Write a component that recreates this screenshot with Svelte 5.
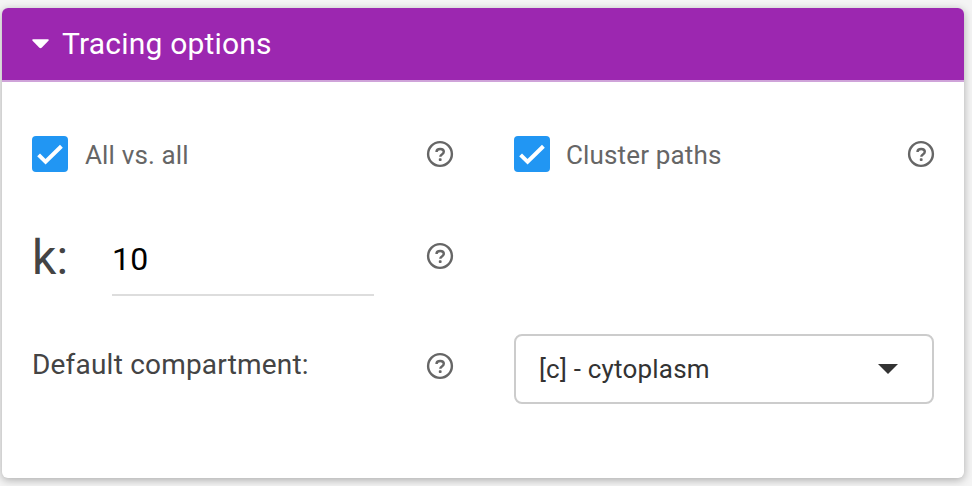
<script>
  let allVsAll = $state(true);
  let cluster = $state(true);
  let k = $state('10');
</script>

{#snippet help()}
  <svg class="help" viewBox="0 0 28 28" aria-label="Help">
    <circle cx="14" cy="14" r="11.9" />
    <path d="M10.5 12C10.5 10.1 12 9 14.2 9s3.6 1.1 3.6 2.8c0 1.3-.8 1.9-1.9 2.6-1.1.7-1.6 1.2-1.6 2.3" />
    <rect x="12.8" y="18.3" width="2.8" height="2.7" rx=".8" />
  </svg>
{/snippet}

{#snippet check(on, toggle, label)}
  <button class="check" role="checkbox" aria-checked={on} onclick={toggle}>
    <span class="box" class:on>
      {#if on}
        <svg viewBox="0 0 36 36"><path d="M6.6 18.8 13.6 25.8 29.4 10.3" /></svg>
      {/if}
    </span>
    <span class="label">{label}</span>
  </button>
{/snippet}

<main>
  <section class="card">
    <header>
      <svg class="caret" viewBox="0 0 18 10"><path d="M1 0h16q1.2.5.4 1.6L10.2 9q-1.2 1-2.4 0L.6 1.6Q-.2.5 1 0z" /></svg>
      <h1>Tracing options</h1>
    </header>
    <div class="body">
      <div class="row first">
        <div class="left">
          {@render check(allVsAll, () => (allVsAll = !allVsAll), 'All vs. all')}
          {@render help()}
        </div>
        <div class="right">
          {@render check(cluster, () => (cluster = !cluster), 'Cluster paths')}
          {@render help()}
        </div>
      </div>
      <div class="row second">
        <div class="left">
          <label class="k" for="k">k:</label>
          <input id="k" bind:value={k} />
          {@render help()}
        </div>
      </div>
      <div class="row third">
        <div class="left">
          <span class="compartment">Default compartment:</span>
          {@render help()}
        </div>
        <button class="select">
          <span>[c] - cytoplasm</span>
          <svg viewBox="0 0 20 10"><path d="M0 0h20L10 10z" /></svg>
        </button>
      </div>
    </div>
  </section>
</main>

<style>
  :global(body) { background: #f4f4f4; overflow: hidden; }
  main {
    box-sizing: border-box;
    width: 972px;
    height: 486px;
    padding: 8px 8px 8px 2px;
    overflow: hidden;
    font-family: Roboto, sans-serif;
  }
  button { font: inherit; background: none; border: 0; padding: 0; margin: 0; }
  .card {
    height: 470px;
    background: #fff;
    border-radius: 6px;
    box-shadow: 0 2px 8px rgba(0, 0, 0, .3);
  }
  header {
    box-sizing: border-box;
    height: 74px;
    display: flex;
    align-items: center;
    padding-left: 30px;
    background: #9c27b0;
    border-bottom: 2px solid #cfa3d9;
    border-radius: 6px 6px 0 0;
    color: #fff;
  }
  .caret { width: 17px; height: 10px; margin-right: 13px; fill: #fff; }
  h1 { margin: 0; font-size: 30px; line-height: 36px; font-weight: 400; letter-spacing: .2px; }
  .body { padding: 0 30px; }
  .row { display: flex; align-items: center; }
  .left { width: 422px; margin-right: auto; display: flex; align-items: center; justify-content: space-between; }
  .right { width: 421px; display: flex; align-items: center; justify-content: space-between; margin-right: -1px; }
  .first { height: 36px; margin-top: 54px; }
  .check { display: flex; align-items: center; }
  .box { width: 36px; height: 36px; border-radius: 4px; box-sizing: border-box; border: 2px solid #666; margin-right: 17px; }
  .right .box { margin-right: 16px; }
  .box.on { background: #2196f3; border: 0; }
  .box svg { display: block; width: 36px; height: 36px; fill: none; stroke: #fff; stroke-width: 4; }
  .label { font-size: 26px; line-height: 36px; letter-spacing: .15px; color: #666; padding-top: 2px; }
  .help { width: 28px; height: 28px; flex: none; fill: none; stroke: #666; stroke-width: 2.4; }
  .help rect { fill: #666; stroke: none; }
  .second { height: 78px; margin-top: 48px; }
  .second .help { margin-bottom: 6px; }
  .k { width: 80px; font-size: 48px; line-height: 60px; letter-spacing: .2px; color: #444; padding-bottom: 2px; }
  input {
    box-sizing: border-box;
    width: 262px;
    height: 74px;
    padding: 2px 0 0;
    margin-right: auto;
    border: 0;
    border-bottom: 2px solid #ddd;
    outline: 0;
    font: 32px Roboto, sans-serif;
    letter-spacing: .2px;
    color: #000;
    background: none;
  }
  .third { height: 70px; margin-top: 36px; }
  .third .help { margin-bottom: 6px; }
  .compartment { font-size: 28px; line-height: 36px; letter-spacing: .2px; color: #444; padding-bottom: 8px; }
  .select {
    box-sizing: border-box;
    width: 420px;
    height: 70px;
    display: flex;
    align-items: center;
    justify-content: space-between;
    padding: 0 34px 0 23px;
    border: 2px solid #ccc;
    border-radius: 8px;
    color: #333;
    font-size: 26px;
    letter-spacing: .2px;
  }
  .select svg { width: 20px; height: 10px; fill: #333; }
</style>
